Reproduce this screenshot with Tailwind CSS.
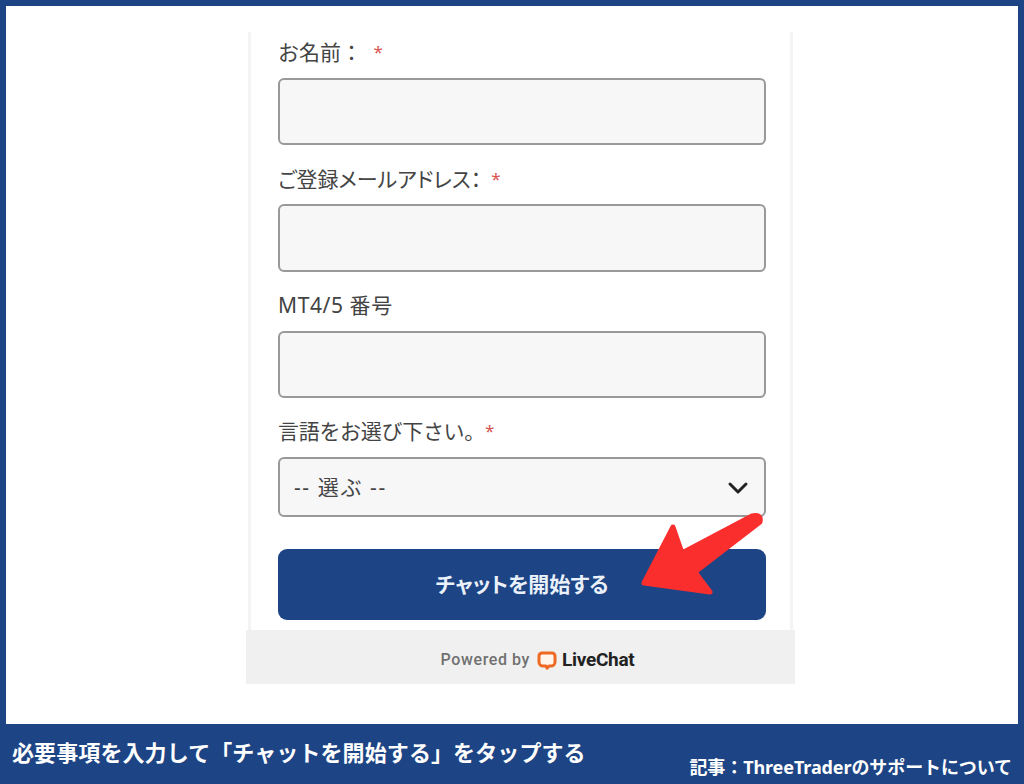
<!DOCTYPE html>
<html lang="ja">
<head>
    <meta charset="UTF-8">
    <meta name="viewport" content="width=device-width, initial-scale=1.0">
    <title>ThreeTrader サポート</title>
    <script src="https://cdn.jsdelivr.net/npm/@tailwindcss/browser@4"></script>
</head>
<body class="w-[1024px] h-[784px] overflow-hidden bg-[#1d4484] flex flex-col font-['Noto_Sans','Noto_Sans_CJK_JP',sans-serif]">
    <main class="relative mx-[6px] mt-[6px] h-[718px] bg-white pt-[26px] pl-[240px]">
        <!-- Chat form card -->
        <div class="w-[549px] h-[652px] flex flex-col">
            <div class="h-[598px] mx-[2px] border-x-[3px] border-[#f4f4f4] bg-white pl-[27px] pr-[24px] text-[#444] text-[21px] flex flex-col">
                <label class="h-[46px] pt-[5px] leading-[30px]">お名前： <span class="ml-[6px] text-[#d9534f] text-[17px] align-top">*</span></label>
                <div class="h-[67px] rounded-[6px] border-2 border-[#999] bg-[#f7f7f7]"></div>
                <label class="h-[59px] pt-[19px] leading-[30px] [font-feature-settings:'palt']">ご登録メールアドレス：<span class="ml-[10px] text-[#d9534f] text-[17px] align-top">*</span></label>
                <div class="h-[68px] rounded-[6px] border-2 border-[#999] bg-[#f7f7f7]"></div>
                <label class="h-[59px] pt-[18px] leading-[30px] tracking-[0.6px]">MT4/5 番号</label>
                <div class="h-[67px] rounded-[6px] border-2 border-[#999] bg-[#f7f7f7]"></div>
                <label class="h-[59px] pt-[18px] leading-[30px] tracking-[-0.3px]">言語をお選び下さい。<span class="text-[#d9534f] text-[17px] align-top">*</span></label>
                <div class="h-[60px] pt-[1px] rounded-[6px] border-2 border-[#999] bg-[#f7f7f7] flex items-center justify-between pl-[14px] pr-[15px]">
                    <span class="tracking-[1.6px]">-- 選ぶ --</span>
                    <svg class="w-[22px] h-[14px]" viewBox="0 0 22 14" fill="none" stroke="#222" stroke-width="3" stroke-linecap="round" stroke-linejoin="round"><path d="M3 3l8 8 8-8"/></svg>
                </div>
                <button class="mt-[32px] h-[71px] rounded-[9px] bg-[#1d4484] text-[#eaf1fa] text-[21px] font-bold [font-feature-settings:'palt']">チャットを開始する</button>
            </div>
            <!-- Footer -->
            <div class="h-[54px] pt-[6px] pl-[34px] bg-[#f0f0f0] flex items-center justify-center">
                <span class="text-[16px] text-[#707070] font-['Roboto',sans-serif] font-medium tracking-[0.6px]">Powered by</span>
                <svg class="ml-[7px] w-[20px] h-[20px]" viewBox="0 0 20 20" fill="none"><path d="M5 3h10a3 3 0 0 1 3 3v6a4 4 0 0 1-4 4h-2l-2 2.200-1-2.200H6a4 4 0 0 1-4-4V6a3 3 0 0 1 3-3z" stroke="#ee6a24" stroke-width="3" stroke-linejoin="round" fill="#fff5ec"/></svg>
                <span class="ml-[5px] text-[19px] text-[#222] font-['Roboto',sans-serif] font-bold tracking-[-0.3px]">LiveChat</span>
            </div>
        </div>
        <!-- Red annotation arrow -->
        <svg class="absolute left-0 top-0 w-[1012px] h-[718px] pointer-events-none" viewBox="6 6 1012 718">
            <path d="M644 583L673 527L682 553L752 516Q762 514 760 522L695 572L710 592Z" fill="#fb2e2e" stroke="#fb2e2e" stroke-width="5" stroke-linejoin="round"/>
        </svg>
    </main>
    <!-- Caption bar -->
    <footer class="h-[60px] flex justify-between text-white font-bold">
        <p class="pl-[12px] pt-[14px] text-[22px] leading-[28px] tracking-[0.1px]">必要事項を入力して「チャットを開始する」をタップする</p>
        <p class="pr-[12px] pt-[29px] text-[18px] leading-[28px] tracking-[-0.1px]">記事：ThreeTraderのサポートについて</p>
    </footer>
</body>
</html>
